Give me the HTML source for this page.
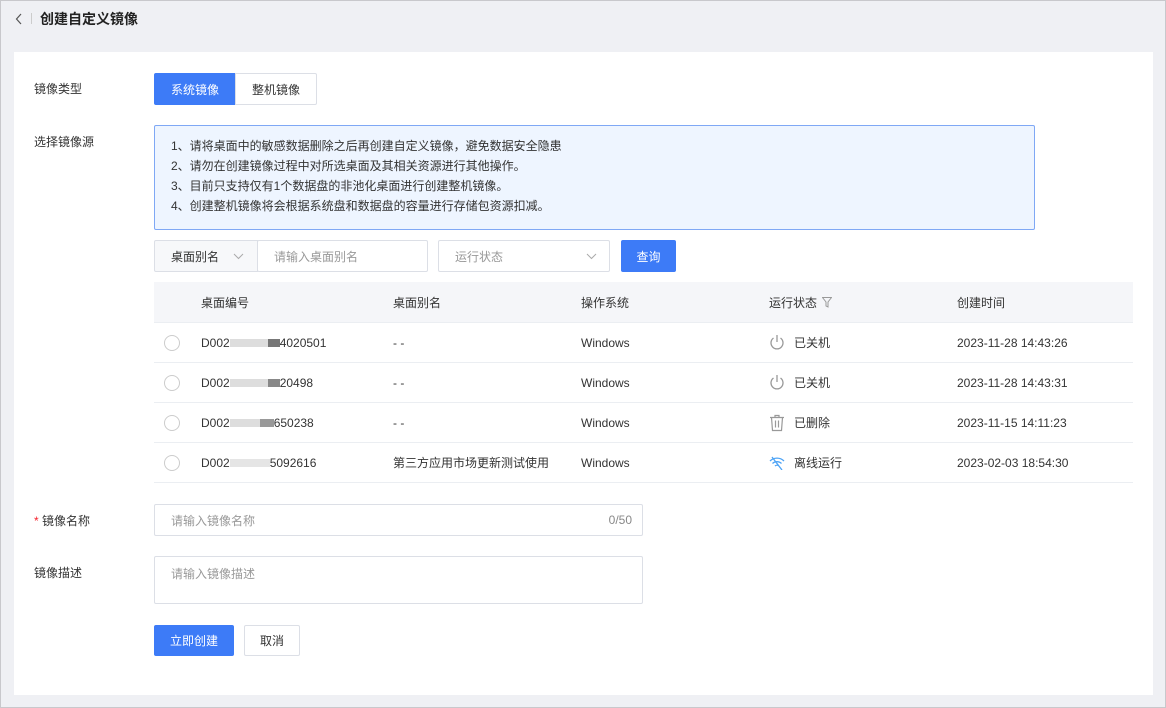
<!DOCTYPE html>
<html><head><meta charset="utf-8"><style>
*{box-sizing:border-box;margin:0;padding:0}
body{width:1166px;height:708px;background:#eff0f4;font-family:"Liberation Sans","Noto Sans CJK SC",sans-serif;font-size:12px;color:#333;position:relative;overflow:hidden}
.a{position:absolute}
.card{position:absolute;left:14px;top:52px;width:1139px;height:643px;background:#fff}
.lbl{position:absolute;left:34px;font-size:12px;color:#333}
.btn{position:absolute;display:flex;align-items:center;justify-content:center;font-size:12px}
.inp{position:absolute;border:1px solid #dcdfe6;border-radius:2px;background:#fff;color:#999;display:flex;align-items:center;padding-left:16px}
.row{position:absolute;left:154px;width:979px;border-bottom:1px solid #ebeef2}
.c{position:absolute;top:0;height:100%;display:flex;align-items:center;white-space:nowrap}
.radio{width:16px;height:16px;border:1px solid #ccc;border-radius:50%}
.blur{display:inline-block;background:#ccc;height:8px}
</style></head><body>
<div class="a" style="left:0;top:0;width:1166px;height:708px;border:1px solid #c8c8cc;z-index:5"></div>
<svg class="a" style="left:15px;top:13px" width="8" height="12" viewBox="0 0 8 12" fill="none" stroke="#555" stroke-width="1.2"><path d="M6 1L1.5 6 6 11"/></svg>
<div class="a" style="left:31px;top:13px;width:1px;height:11px;background:#ccc"></div>
<div class="a" style="left:40px;top:9px;font-size:14px;font-weight:bold;color:#222">创建自定义镜像</div>
<div class="card"></div>
<div class="lbl" style="top:80px">镜像类型</div>
<div class="btn" style="left:154px;top:73px;width:82px;height:32px;background:#3d7bf7;color:#fff;border-radius:2px 0 0 2px">系统镜像</div>
<div class="btn" style="left:235px;top:73px;width:82px;height:32px;border:1px solid #dcdfe6;color:#333;border-radius:0 2px 2px 0">整机镜像</div>
<div class="lbl" style="top:133px">选择镜像源</div>
<div class="a" style="left:154px;top:125px;width:881px;height:105px;background:#eef5ff;border:1px solid #7fa8f5;border-radius:2px;padding:10px 0 0 16px;line-height:20px;color:#333">
1、请将桌面中的敏感数据删除之后再创建自定义镜像，避免数据安全隐患<br>2、请勿在创建镜像过程中对所选桌面及其相关资源进行其他操作。<br>3、目前只支持仅有1个数据盘的非池化桌面进行创建整机镜像。<br>4、创建整机镜像将会根据系统盘和数据盘的容量进行存储包资源扣减。</div>
<div class="inp" style="left:154px;top:240px;width:104px;height:32px;background:#f7f8fa;color:#333;border-radius:2px 0 0 2px">桌面别名<svg style="position:absolute;left:78px;top:12px" width="11" height="7" viewBox="0 0 11 7" fill="none" stroke="#aaa"><path d="M1 1l4.5 4.5L10 1"/></svg></div>
<div class="inp" style="left:257px;top:240px;width:171px;height:32px">请输入桌面别名</div>
<div class="inp" style="left:438px;top:240px;width:172px;height:32px">运行状态<svg style="position:absolute;right:12px;top:12px" width="11" height="7" viewBox="0 0 11 7" fill="none" stroke="#aaa"><path d="M1 1l4.5 4.5L10 1"/></svg></div>
<div class="btn" style="left:621px;top:240px;width:55px;height:32px;background:#3d7bf7;color:#fff;border-radius:2px">查询</div>
<div class="row" style="top:282px;height:41px;background:#f5f6f9">
<div class="c" style="left:47px">桌面编号</div><div class="c" style="left:239px">桌面别名</div><div class="c" style="left:427px">操作系统</div><div class="c" style="left:615px">运行状态 <svg style="margin-left:5px" width="10" height="11" viewBox="0 0 10 11" fill="none" stroke="#999"><path d="M.5 .5h9L6 5v5L4 9V5z"/></svg></div><div class="c" style="left:803px">创建时间</div></div>
<div class="row" style="top:323px;height:40px"><div class="c" style="left:10px"><div class="radio"></div></div><div class="c" style="left:47px">D002<span class="blur" style="width:38px;background:#ddd"></span><span class="blur" style="width:12px;background:#777"></span>4020501</div><div class="c" style="left:239px">- -</div><div class="c" style="left:427px">Windows</div><div class="c" style="left:615px"><svg width="16" height="18" viewBox="0 0 16 18" style="margin-right:9px" fill="none" stroke="#999" stroke-width="1.3"><path d="M8 1v7M4.5 4a6 6 0 1 0 7 0"/></svg>已关机</div><div class="c" style="left:803px">2023-11-28 14:43:26</div></div>
<div class="row" style="top:363px;height:40px"><div class="c" style="left:10px"><div class="radio"></div></div><div class="c" style="left:47px">D002<span class="blur" style="width:38px;background:#ddd"></span><span class="blur" style="width:12px;background:#888"></span>20498</div><div class="c" style="left:239px">- -</div><div class="c" style="left:427px">Windows</div><div class="c" style="left:615px"><svg width="16" height="18" viewBox="0 0 16 18" style="margin-right:9px" fill="none" stroke="#999" stroke-width="1.3"><path d="M8 1v7M4.5 4a6 6 0 1 0 7 0"/></svg>已关机</div><div class="c" style="left:803px">2023-11-28 14:43:31</div></div>
<div class="row" style="top:403px;height:40px"><div class="c" style="left:10px"><div class="radio"></div></div><div class="c" style="left:47px">D002<span class="blur" style="width:30px;background:#ddd"></span><span class="blur" style="width:14px;background:#999"></span>650238</div><div class="c" style="left:239px">- -</div><div class="c" style="left:427px">Windows</div><div class="c" style="left:615px"><svg width="16" height="18" viewBox="0 0 16 18" style="margin-right:9px" fill="none" stroke="#999" stroke-width="1.2"><path d="M1 3.5h14M6 3.5V1.5h4v2M2.5 3.5l1 13h9l1-13M6.5 6.5v7M9.5 6.5v7"/></svg>已删除</div><div class="c" style="left:803px">2023-11-15 14:11:23</div></div>
<div class="row" style="top:443px;height:40px"><div class="c" style="left:10px"><div class="radio"></div></div><div class="c" style="left:47px">D002<span class="blur" style="width:40px;background:#e5e5e5"></span>5092616</div><div class="c" style="left:239px">第三方应用市场更新测试使用</div><div class="c" style="left:427px">Windows</div><div class="c" style="left:615px"><svg width="16" height="14" viewBox="0 0 16 14" style="margin-right:9px" fill="none" stroke="#4da3f5" stroke-width="1.3"><path d="M1 5a10 10 0 0 1 14 0M3.5 7.5a6.5 6.5 0 0 1 9 0M6 10a3 3 0 0 1 4 0M3 1l10 13"/></svg>离线运行</div><div class="c" style="left:803px">2023-02-03 18:54:30</div></div>
<div class="lbl" style="top:512px"><span style="color:#f5222d">*</span> 镜像名称</div>
<div class="inp" style="left:154px;top:504px;width:489px;height:32px">请输入镜像名称<span style="position:absolute;right:10px;color:#888">0/50</span></div>
<div class="lbl" style="top:564px">镜像描述</div>
<div class="inp" style="left:154px;top:556px;width:489px;height:48px;align-items:flex-start;padding-top:8px">请输入镜像描述</div>
<div class="btn" style="left:154px;top:625px;width:80px;height:31px;background:#3d7bf7;color:#fff;border-radius:2px">立即创建</div>
<div class="btn" style="left:244px;top:625px;width:56px;height:31px;border:1px solid #dcdfe6;border-radius:2px">取消</div>
</body></html>
